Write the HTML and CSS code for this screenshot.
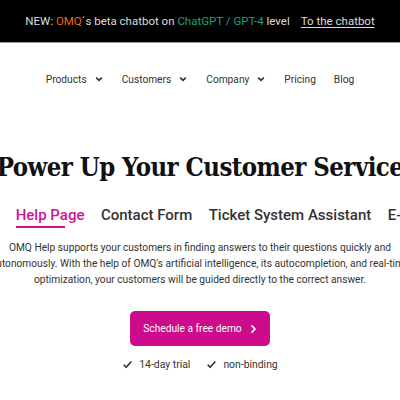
FILE: index.html
```html
<!DOCTYPE html>
<html lang="en">
<head>
    <meta charset="UTF-8">
    <meta name="viewport" content="width=device-width, initial-scale=1.0">
    <title>OMQ Help</title>
    <link rel="stylesheet" href="styles.css">
</head>
<body>
    <div class="announce">
        <span>NEW: <span class="orange">OMQ</span>´s beta chatbot on <span class="green">ChatGPT / GPT-4</span> level</span>
        <a class="announce-link" href="#">To the chatbot</a>
    </div>

    <nav class="main-nav">
        <a class="nav-item" href="#">Products <svg class="chev" viewBox="0 0 10 10"><path d="M2.2 3.6 L5 6.4 L7.8 3.6"/></svg></a>
        <a class="nav-item" href="#">Customers <svg class="chev" viewBox="0 0 10 10"><path d="M2.2 3.6 L5 6.4 L7.8 3.6"/></svg></a>
        <a class="nav-item" href="#">Company <svg class="chev" viewBox="0 0 10 10"><path d="M2.2 3.6 L5 6.4 L7.8 3.6"/></svg></a>
        <a class="nav-item" href="#">Pricing</a>
        <a class="nav-item" href="#">Blog</a>
    </nav>

    <section class="hero">
        <h1>Power Up Your Customer Service</h1>

        <div class="tabs">
            <span class="tab">Chatbot</span>
            <span class="tab active">Help Page</span>
            <span class="tab">Contact Form</span>
            <span class="tab">Ticket System Assistant</span>
            <span class="tab">E-Mail Assistant</span>
        </div>

        <p class="intro">OMQ Help supports your customers in finding answers to their questions quickly and<br>autonomously. With the help of OMQ's artificial intelligence, its autocompletion, and real-time<br>optimization, your customers will be guided directly to the correct answer.</p>

        <a class="demo-btn" href="#">Schedule a free demo <svg class="btn-chev" viewBox="0 0 10 10"><path d="M3.5 1.4 L7 5 L3.5 8.6"/></svg></a>

        <div class="perks">
            <span class="perk"><svg class="check" viewBox="0 0 12 12"><path d="M1.8 6.3 L4.6 9 L10.2 2.8"/></svg>14-day trial</span>
            <span class="perk"><svg class="check" viewBox="0 0 12 12"><path d="M1.8 6.3 L4.6 9 L10.2 2.8"/></svg>non-binding</span>
        </div>
    </section>
</body>
</html>
```

FILE: styles.css
```css
body {
    margin: 0;
    font-family: Roboto, 'Liberation Sans', sans-serif;
    background-color: #fff;
    color: #333;
    overflow-x: hidden;
}

a {
    text-decoration: none;
    color: inherit;
}

/* Ankündigungsleiste */
.announce {
    height: 43px;
    background-color: #000;
    border-bottom: 1px solid #999;
    display: flex;
    align-items: center;
    justify-content: center;
    gap: 11px;
    font-size: 11.5px;
    color: #ddd;
    box-sizing: border-box;
}

.orange {
    color: #f0650f;
}

.green {
    color: #1ba37c;
}

.announce-link {
    text-decoration: underline;
    text-underline-offset: 2px;
}

/* Hauptnavigation */
.main-nav {
    display: flex;
    justify-content: center;
    gap: 18px;
    margin-top: 30.5px;
    font-size: 10.2px;
    color: #333;
}

.nav-item {
    display: flex;
    align-items: center;
    gap: 7px;
}

.chev {
    width: 10px;
    height: 10px;
    fill: none;
    stroke: #333;
    stroke-width: 1.7;
}

/* Hero */
.hero {
    display: flex;
    flex-direction: column;
    align-items: center;
    margin-top: 67px;
}

h1 {
    margin: 0;
    font-family: 'DejaVu Serif', serif;
    font-stretch: condensed;
    font-weight: bold;
    font-size: 25.5px;
    line-height: 30px;
    letter-spacing: -0.55px;
    color: #111;
    white-space: nowrap;
}

.tabs {
    align-self: flex-start;
    display: flex;
    gap: 16.5px;
    margin-top: 24px;
    margin-left: -54px;
    font-size: 15px;
    font-weight: 500;
    color: #333;
    white-space: nowrap;
}

.tab {
    padding-bottom: 4px;
}

.tab.active {
    color: #cc1493;
    background: linear-gradient(#cc1493, #cc1493) left bottom / 49px 2px no-repeat;
}

.intro {
    margin: 12px 0 0;
    font-size: 10.2px;
    line-height: 16px;
    text-align: center;
    white-space: nowrap;
    color: #333;
}

.demo-btn {
    margin-top: 23.5px;
    height: 35px;
    padding: 0 12px 0 13px;
    display: flex;
    align-items: center;
    gap: 6px;
    background-color: #cc0c8c;
    color: #fff;
    border-radius: 5px;
    font-size: 10.2px;
}

.btn-chev {
    width: 10px;
    height: 10px;
    fill: none;
    stroke: #fff;
    stroke-width: 1.6;
}

.perks {
    display: flex;
    gap: 16px;
    margin-top: 12px;
    font-size: 10.4px;
    color: #333;
}

.perk {
    display: flex;
    align-items: center;
    gap: 6px;
}

.check {
    width: 11px;
    height: 11px;
    fill: none;
    stroke: #222;
    stroke-width: 1.6;
}
```
